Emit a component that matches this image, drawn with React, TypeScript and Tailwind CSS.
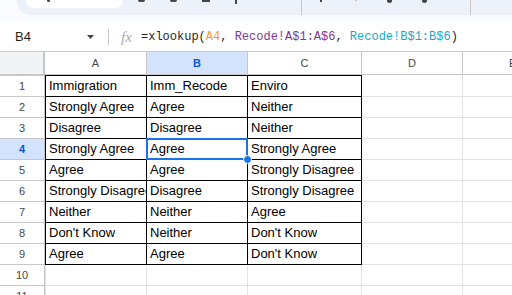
import React from "react";

const ROWS: string[][] = [
  ["Immigration", "Imm_Recode", "Enviro"],
  ["Strongly Agree", "Agree", "Neither"],
  ["Disagree", "Disagree", "Neither"],
  ["Strongly Agree", "Agree", "Strongly Agree"],
  ["Agree", "Agree", "Strongly Disagree"],
  ["Strongly Disagree", "Disagree", "Strongly Disagree"],
  ["Neither", "Neither", "Agree"],
  ["Don't Know", "Neither", "Don't Know"],
  ["Agree", "Agree", "Don't Know"],
];

const SELECTED_ROW = 4;

// cell widths include the right border (box-border)
const COLS = [
  { key: "A", w: "w-[102px]" },
  { key: "B", w: "w-[101px]" },
  { key: "C", w: "w-[114px]" },
  { key: "D", w: "w-[101px]" },
];

function Toolbar() {
  return (
    <div className="flex h-[15px] overflow-hidden bg-[#f9fbfd]">
      <div className="w-[17px] shrink-0" />
      <div className="flex flex-1 items-start rounded-bl-[14px] bg-[#edf2fa]">
        <div className="relative ml-[9px] h-[8px] w-[97px] shrink-0 rounded-b-[8px] bg-white">
          <div className="absolute left-[21px] top-0 h-[2px] w-[3px] rounded-b-full bg-[#444746]" />
        </div>
        {/* bottoms of toolbar icons peeking under the crop */}
        <div className="ml-[15px] h-[2px] w-[7px] rounded-b-full border-b-2 border-[#444746]" />
        <div className="ml-[25px] h-[2px] w-[7px] rounded-b-full border-b-2 border-[#444746]" />
        <div className="ml-[25px] h-[2px] w-[8px] border-x-2 border-b-2 border-[#444746]" />
        <div className="ml-[25px] h-[4px] w-[2px] bg-[#444746]" />
        <div className="ml-[26px] mt-[-9px] text-[11px] leading-none text-[#444746]">100%</div>
        <div className="ml-[10px] h-[15px] w-px bg-[#c7c7c7]" />
        <div className="ml-[18px] h-[2px] w-[2px] bg-[#444746]" />
        <div className="ml-[33px] h-[1px] w-[2px] bg-[#c7c7c7]" />
        <div className="ml-[30px] h-[3px] w-[5px] rounded-b-full bg-[#444746]" />
        <div className="ml-[30px] h-[3px] w-[5px] rounded-b-full bg-[#444746]" />
        <div className="ml-[43px] h-[15px] w-px bg-[#c7c7c7]" />
      </div>
    </div>
  );
}

function FormulaBar() {
  return (
    <div className="flex h-[29px] items-center border-b border-[#c7c7c7] bg-white">
      <div className="ml-[15px] w-[70px] text-[13px] text-[#1f1f1f]">B4</div>
      <svg width="8" height="4" viewBox="0 0 8 4" className="ml-[2px]">
        <path d="M0 0h7L3.5 4z" fill="#444746" />
      </svg>
      <div className="ml-[13px] h-[16px] w-px bg-[#c7c7c7]" />
      <div className="ml-[12px] w-[20px] text-[15px] italic leading-none text-[#a8abaf] [font-family:'Liberation_Serif',serif]">
        fx
      </div>
      <div className="whitespace-pre text-[12px] text-[#1f1f1f] [font-family:'Liberation_Mono',monospace]">
        =xlookup(<span className="text-[#f7981d]">A4</span>,{" "}
        <span className="text-[#7e3794]">Recode!A$1:A$6</span>,{" "}
        <span className="text-[#11a9cc]">Recode!B$1:B$6</span>)
      </div>
    </div>
  );
}

function HeaderRow() {
  return (
    <div className="flex h-[23px] border-b border-[#c7c7c7] text-[11px] text-[#444746]">
      <div className="w-[45px] shrink-0 border-r-2 border-[#c7c7c7] bg-[#f1f3f4]" />
      {COLS.map((c) => (
        <div
          key={c.key}
          className={`${c.w} flex shrink-0 items-center justify-center border-r border-[#c7c7c7] ${
            c.key === "B" ? "bg-[#d3e3fd] font-bold text-[#0b57d0]" : "bg-white"
          }`}
        >
          {c.key}
        </div>
      ))}
      {/* column E runs past the right edge; its letter sits at the edge */}
      <div className="flex min-w-0 flex-1 items-center overflow-hidden whitespace-nowrap bg-white pl-[46px]">E</div>
    </div>
  );
}

function DataRow({ n, values }: { n: number; values?: string[] }) {
  const sel = n === SELECTED_ROW;
  const hasData = !!values;
  const top = n === 1 ? "border-t border-t-black" : "";
  return (
    <div className={`flex ${n === 1 ? "h-[22px]" : "h-[21px]"}`}>
      <div
        className={`flex w-[45px] shrink-0 items-center justify-center border-r border-b border-[#c7c7c7] text-[11px] ${
          sel ? "bg-[#d3e3fd] font-bold text-[#0b57d0]" : "bg-white text-[#444746]"
        } ${n === 1 ? "border-t border-t-[#c7c7c7]" : ""}`}
      >
        {n}
      </div>
      {COLS.map((c, i) => {
        const inData = hasData && i < 3;
        const border = inData ? "border-black" : "border-[#e1e1e1]";
        return (
          <div
            key={c.key}
            className={`relative ${c.w} flex shrink-0 items-center whitespace-nowrap border-r border-b ${border} ${
              i === 0 ? `border-l ${border}` : ""
            } ${inData ? top : ""} pl-[3px] text-[13px] text-black`}
          >
            <span className="overflow-hidden">{inData ? values![i] : ""}</span>
            {sel && c.key === "B" && (
              <>
                <div className="pointer-events-none absolute -inset-[1px] border-2 border-[#1a73e8]" />
                <div className="absolute -bottom-[5px] -right-[5px] z-10 h-[9px] w-[9px] rounded-full border border-white bg-[#1a73e8]" />
              </>
            )}
          </div>
        );
      })}
      <div className="flex-1 border-b border-[#e1e1e1]" />
    </div>
  );
}

export default function App() {
  return (
    <div className="h-[295px] w-[512px] overflow-hidden bg-white [font-family:'Liberation_Sans',Arial,sans-serif]">
      <Toolbar />
      <div className="h-[8px] bg-[#f9fbfd]" />
      <FormulaBar />
      <HeaderRow />
      {Array.from({ length: 11 }, (_, k) => (
        <DataRow key={k} n={k + 1} values={ROWS[k]} />
      ))}
    </div>
  );
}
